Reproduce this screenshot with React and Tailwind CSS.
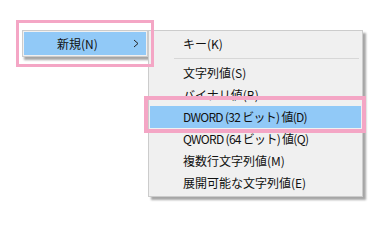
import React from 'react';

const items = [
  { label: 'キー(K)' },
  { sep: true },
  { label: '文字列値(S)' },
  { label: 'バイナリ値(B)' },
  { label: 'DWORD (32 ビット) 値(D)', active: true, tight: true },
  { label: 'QWORD (64 ビット) 値(Q)', tight: true },
  { label: '複数行文字列値(M)' },
  { label: '展開可能な文字列値(E)' },
];

export default function App() {
  return (
    <div className="relative w-[388px] h-[240px] bg-white overflow-hidden font-['Noto_Sans_CJK_JP',sans-serif] text-[12px] text-[#111]">
      <div className="flex items-start pt-[30px] pl-[22px]">
        {/* 親メニュー */}
        <div className="w-[126px] border border-[#cccccc] bg-[#f0f0f0] p-px shadow-[2px_3px_2px_rgba(0,0,0,0.35)]">
          <div className="h-[23px] flex items-center justify-between bg-[#91c9f7] pl-[33px] pr-[6px]">
            <span>新規(N)</span>
            <svg width="6" height="9" viewBox="0 0 6 9" className="mr-[1px]">
              <polyline points="1,1 5,4.5 1,8" fill="none" stroke="#222" strokeWidth="1" />
            </svg>
          </div>
        </div>

        {/* サブメニュー */}
        <div className="w-[215px] border border-[#cccccc] bg-[#f0f0f0] py-[2px] px-px shadow-[3px_3px_2px_rgba(0,0,0,0.35)]">
          {items.map((it, i) =>
            it.sep ? (
              <div key={i} className="h-[7px] flex items-center pl-[24px] pr-[2px]">
                <div className="h-px w-full bg-[#d7d7d7]" />
              </div>
            ) : (
              <div
                key={i}
                className={
                  'h-[22px] flex items-center pl-[33px] ' +
                  (it.active ? 'bg-[#91c9f7] ' : '') +
                  (it.tight ? 'tracking-[-0.7px]' : '')
                }
              >
                {it.label}
              </div>
            )
          )}
        </div>
      </div>

      {/* 注釈の枠 */}
      <div className="absolute left-[16px] top-[20px] w-[138px] h-[47px] border-[3px] border-[#f4a6c5]" />
      <div className="absolute left-[144px] top-[96px] w-[222px] h-[37px] border-[4px] border-[#f4a6c5]" />
    </div>
  );
}
